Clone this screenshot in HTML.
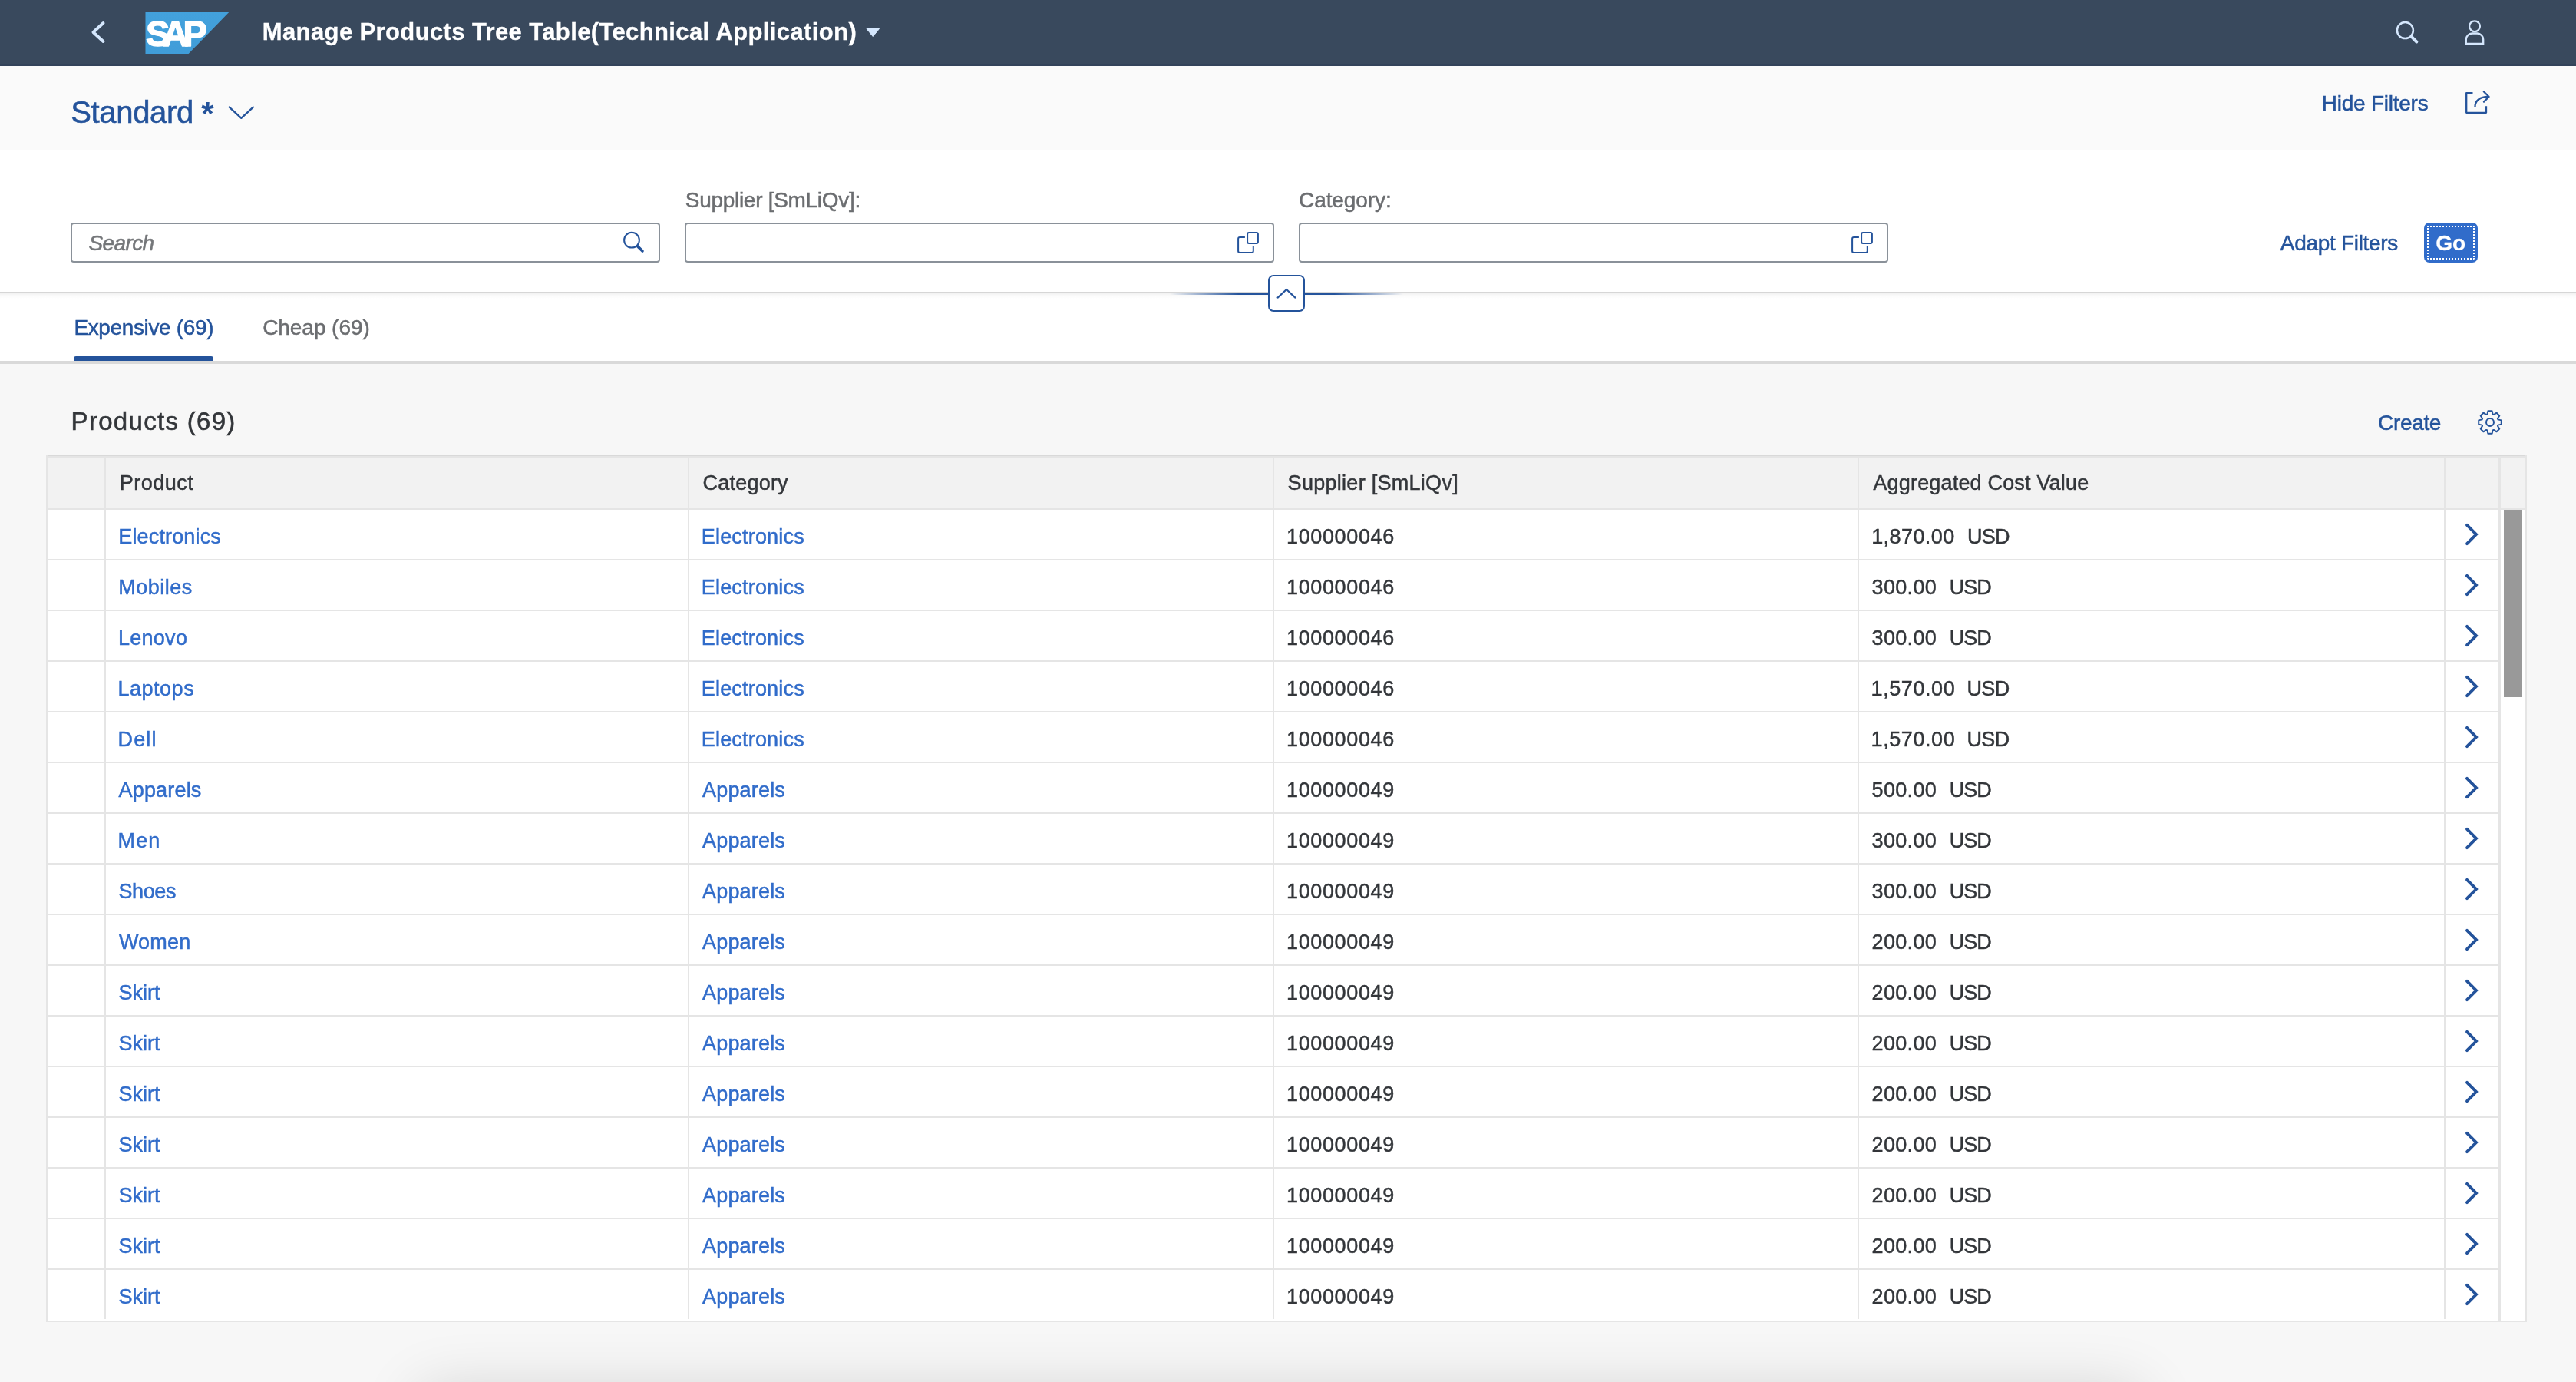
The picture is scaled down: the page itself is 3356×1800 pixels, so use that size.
<!DOCTYPE html><html lang="en"><head><meta charset="utf-8"><title>Manage Products Tree Table(Technical Application)</title><style>
*{box-sizing:border-box;margin:0;padding:0}
html,body{width:3356px;height:1800px;overflow:hidden;background:#f7f7f7;font-family:"Liberation Sans", sans-serif;}
body{position:relative;will-change:transform}
.abs{position:absolute}
svg{position:absolute;left:0;top:0;overflow:visible}
.shell{position:absolute;left:0;top:0;width:3356px;height:86px;background:#39495d}
.band{position:absolute;left:0;top:86px;width:3356px;height:110px;background:#fafafa}
.fbar{position:absolute;left:0;top:196px;width:3356px;height:184px;background:#fff}
.fline{position:absolute;left:0;top:380px;width:3356px;height:2px;background:#d6d6d6}
.fsh{position:absolute;left:0;top:382px;width:3356px;height:7px;background:linear-gradient(to bottom,rgba(0,0,0,.055),rgba(0,0,0,.02) 40%,rgba(0,0,0,0))}
.tabs{position:absolute;left:0;top:382px;width:3356px;height:88px;background:#fff}
.tabline{position:absolute;left:0;top:470px;width:3356px;height:4px;background:#d9d9d9}
.inp{position:absolute;top:290px;height:52px;width:768px;border:2px solid #8a9199;border-radius:4px;background:#fff}
.hdr{position:absolute;left:62px;top:596px;width:3228px;height:66px;background:#f2f2f2}
.vl{position:absolute;width:2px;background:#e5e5e5}
.hl{position:absolute;height:2px;background:#e5e5e5}
.tb{position:absolute;left:62px;top:664px;width:3196px;height:1056px;background:#fff}
</style></head><body>
<div class="shell"></div><div class="abs" style="left:0;top:84px;width:3356px;height:2px;background:#33435a"></div>
<div style="position:absolute;left:341.80px;top:26.00px;font-size:31px;line-height:1;color:#fff;white-space:nowrap;letter-spacing:0.381px;-webkit-text-stroke:0.3px #fff;font-weight:bold;">Manage Products Tree Table(Technical Application)</div>
<div class="band"></div>
<div style="position:absolute;left:92.20px;top:126.00px;font-size:40px;line-height:1;color:#24539b;white-space:nowrap;letter-spacing:-0.334px;-webkit-text-stroke:0.6px #24539b;">Standard</div>
<div style="position:absolute;left:262.20px;top:127.00px;font-size:42px;line-height:1;color:#24539b;white-space:nowrap;letter-spacing:0.000px;font-weight:bold">*</div>
<div style="position:absolute;left:3024.80px;top:121.00px;font-size:28px;line-height:1;color:#24539b;white-space:nowrap;letter-spacing:-0.246px;-webkit-text-stroke:0.5px #24539b;">Hide Filters</div>
<div class="fbar"></div>
<div class="tabs"></div><div class="fline"></div><div class="fsh"></div><div class="tabline"></div>
<div class="inp" style="left:92px"></div><div class="inp" style="left:892px"></div><div class="inp" style="left:1692px"></div>
<div style="position:absolute;left:115.60px;top:303.00px;font-size:28px;line-height:1;color:#75777a;white-space:nowrap;letter-spacing:-0.648px;-webkit-text-stroke:0.5px #75777a;font-style:italic">Search</div>
<div style="position:absolute;left:892.80px;top:247.00px;font-size:28px;line-height:1;color:#6b6d70;white-space:nowrap;letter-spacing:-0.294px;-webkit-text-stroke:0.5px #6b6d70;">Supplier [SmLiQv]:</div>
<div style="position:absolute;left:1692.00px;top:247.00px;font-size:28px;line-height:1;color:#6b6d70;white-space:nowrap;letter-spacing:-0.082px;-webkit-text-stroke:0.5px #6b6d70;">Category:</div>
<div style="position:absolute;left:2970.80px;top:303.00px;font-size:28px;line-height:1;color:#24539b;white-space:nowrap;letter-spacing:-0.300px;-webkit-text-stroke:0.5px #24539b;">Adapt Filters</div>
<div class="abs" style="left:3158px;top:290px;width:70px;height:52px;border-radius:7px;background:#316cca"></div>
<div class="abs" style="left:3162px;top:294px;width:62px;height:44px;border:2px dotted #fff;border-radius:2px"></div>
<div style="position:absolute;left:3173.20px;top:303.00px;font-size:28px;line-height:1;color:#fff;white-space:nowrap;letter-spacing:0.000px;-webkit-text-stroke:0.3px #fff;font-weight:bold">Go</div>
<div style="position:absolute;left:96.40px;top:413.00px;font-size:28px;line-height:1;color:#24539b;white-space:nowrap;letter-spacing:-0.361px;-webkit-text-stroke:0.5px #24539b;">Expensive (69)</div>
<div style="position:absolute;left:342.20px;top:413.00px;font-size:28px;line-height:1;color:#6b6d70;white-space:nowrap;letter-spacing:-0.060px;-webkit-text-stroke:0.5px #6b6d70;">Cheap (69)</div>
<div class="abs" style="left:96px;top:464px;width:182px;height:6px;background:#24539b;border-radius:3px 3px 0 0"></div>
<div class="abs" style="left:1524px;top:382px;width:128px;height:2px;background:linear-gradient(to right,rgba(36,83,155,0),#24539b 70%)"></div>
<div class="abs" style="left:1700px;top:382px;width:128px;height:2px;background:linear-gradient(to left,rgba(36,83,155,0),#24539b 70%)"></div>
<div class="abs" style="left:1652px;top:358px;width:48px;height:48px;border:2px solid #24539b;border-radius:7px;background:#fff"></div>
<div style="position:absolute;left:92.60px;top:532.00px;font-size:33px;line-height:1;color:#33363a;white-space:nowrap;letter-spacing:1.305px;-webkit-text-stroke:0.6px #33363a;">Products (69)</div>
<div style="position:absolute;left:3098.00px;top:537.00px;font-size:28px;line-height:1;color:#24539b;white-space:nowrap;letter-spacing:-0.324px;-webkit-text-stroke:0.5px #24539b;">Create</div>
<div class="abs" style="left:60px;top:592px;width:3232px;height:2px;background:#d9d9d9"></div>
<div class="abs" style="left:60px;top:594px;width:3232px;height:2px;background:#e5e5e5"></div>
<div class="hdr"></div>
<div class="tb"></div>
<div class="abs" style="left:3258px;top:664px;width:32px;height:1056px;background:#fff"></div>
<div class="vl" style="left:60px;top:592px;height:1128px"></div>
<div class="vl" style="left:3290px;top:592px;height:1128px"></div>
<div class="vl" style="left:136px;top:596px;height:1122px"></div>
<div class="vl" style="left:896px;top:596px;height:1122px"></div>
<div class="vl" style="left:1658px;top:596px;height:1122px"></div>
<div class="vl" style="left:2420px;top:596px;height:1122px"></div>
<div class="vl" style="left:3184px;top:596px;height:1122px"></div>
<div class="vl" style="left:3254px;top:596px;width:4px;height:1124px"></div>
<div class="hl" style="left:62px;top:662px;width:3228px"></div>
<div class="hl" style="left:62px;top:728px;width:3192px"></div>
<div class="hl" style="left:62px;top:794px;width:3192px"></div>
<div class="hl" style="left:62px;top:860px;width:3192px"></div>
<div class="hl" style="left:62px;top:926px;width:3192px"></div>
<div class="hl" style="left:62px;top:992px;width:3192px"></div>
<div class="hl" style="left:62px;top:1058px;width:3192px"></div>
<div class="hl" style="left:62px;top:1124px;width:3192px"></div>
<div class="hl" style="left:62px;top:1190px;width:3192px"></div>
<div class="hl" style="left:62px;top:1256px;width:3192px"></div>
<div class="hl" style="left:62px;top:1322px;width:3192px"></div>
<div class="hl" style="left:62px;top:1388px;width:3192px"></div>
<div class="hl" style="left:62px;top:1454px;width:3192px"></div>
<div class="hl" style="left:62px;top:1520px;width:3192px"></div>
<div class="hl" style="left:62px;top:1586px;width:3192px"></div>
<div class="hl" style="left:62px;top:1652px;width:3192px"></div>
<div class="hl" style="left:60px;top:1720px;width:3232px;background:#e5e5e5"></div>
<div class="abs" style="left:3262px;top:664px;width:24px;height:244px;background:#999"></div>
<div style="position:absolute;left:155.80px;top:616.00px;font-size:27px;line-height:1;color:#33363a;white-space:nowrap;letter-spacing:0.480px;-webkit-text-stroke:0.5px #33363a;">Product</div>
<div style="position:absolute;left:915.60px;top:616.00px;font-size:27px;line-height:1;color:#33363a;white-space:nowrap;letter-spacing:0.203px;-webkit-text-stroke:0.5px #33363a;">Category</div>
<div style="position:absolute;left:1677.60px;top:616.00px;font-size:27px;line-height:1;color:#33363a;white-space:nowrap;letter-spacing:0.282px;-webkit-text-stroke:0.5px #33363a;">Supplier [SmLiQv]</div>
<div style="position:absolute;left:2440.40px;top:616.00px;font-size:27px;line-height:1;color:#33363a;white-space:nowrap;letter-spacing:0.180px;-webkit-text-stroke:0.5px #33363a;">Aggregated Cost Value</div>
<div style="position:absolute;left:154.30px;top:686.00px;font-size:27px;line-height:1;color:#316cca;white-space:nowrap;letter-spacing:0.144px;-webkit-text-stroke:0.5px #316cca;">Electronics</div>
<div style="position:absolute;left:913.80px;top:686.00px;font-size:27px;line-height:1;color:#316cca;white-space:nowrap;letter-spacing:0.180px;-webkit-text-stroke:0.5px #316cca;">Electronics</div>
<div style="position:absolute;left:1676.00px;top:686.00px;font-size:27px;line-height:1;color:#33363a;white-space:nowrap;letter-spacing:0.631px;-webkit-text-stroke:0.5px #33363a;">100000046</div>
<div style="position:absolute;left:2438.20px;top:686.00px;font-size:27px;line-height:1;color:#33363a;white-space:nowrap;letter-spacing:0.419px;-webkit-text-stroke:0.5px #33363a;">1,870.00</div>
<div style="position:absolute;left:2563.00px;top:686.00px;font-size:27px;line-height:1;color:#33363a;white-space:nowrap;letter-spacing:-0.720px;-webkit-text-stroke:0.5px #33363a;">USD</div>
<div style="position:absolute;left:154.30px;top:752.00px;font-size:27px;line-height:1;color:#316cca;white-space:nowrap;letter-spacing:0.480px;-webkit-text-stroke:0.5px #316cca;">Mobiles</div>
<div style="position:absolute;left:913.80px;top:752.00px;font-size:27px;line-height:1;color:#316cca;white-space:nowrap;letter-spacing:0.180px;-webkit-text-stroke:0.5px #316cca;">Electronics</div>
<div style="position:absolute;left:1676.00px;top:752.00px;font-size:27px;line-height:1;color:#33363a;white-space:nowrap;letter-spacing:0.631px;-webkit-text-stroke:0.5px #33363a;">100000046</div>
<div style="position:absolute;left:2438.60px;top:752.00px;font-size:27px;line-height:1;color:#33363a;white-space:nowrap;letter-spacing:0.324px;-webkit-text-stroke:0.5px #33363a;">300.00</div>
<div style="position:absolute;left:2539.80px;top:752.00px;font-size:27px;line-height:1;color:#33363a;white-space:nowrap;letter-spacing:-0.990px;-webkit-text-stroke:0.5px #33363a;">USD</div>
<div style="position:absolute;left:153.90px;top:818.00px;font-size:27px;line-height:1;color:#316cca;white-space:nowrap;letter-spacing:0.288px;-webkit-text-stroke:0.5px #316cca;">Lenovo</div>
<div style="position:absolute;left:913.80px;top:818.00px;font-size:27px;line-height:1;color:#316cca;white-space:nowrap;letter-spacing:0.180px;-webkit-text-stroke:0.5px #316cca;">Electronics</div>
<div style="position:absolute;left:1676.00px;top:818.00px;font-size:27px;line-height:1;color:#33363a;white-space:nowrap;letter-spacing:0.631px;-webkit-text-stroke:0.5px #33363a;">100000046</div>
<div style="position:absolute;left:2438.60px;top:818.00px;font-size:27px;line-height:1;color:#33363a;white-space:nowrap;letter-spacing:0.324px;-webkit-text-stroke:0.5px #33363a;">300.00</div>
<div style="position:absolute;left:2539.80px;top:818.00px;font-size:27px;line-height:1;color:#33363a;white-space:nowrap;letter-spacing:-0.990px;-webkit-text-stroke:0.5px #33363a;">USD</div>
<div style="position:absolute;left:153.50px;top:884.00px;font-size:27px;line-height:1;color:#316cca;white-space:nowrap;letter-spacing:0.510px;-webkit-text-stroke:0.5px #316cca;">Laptops</div>
<div style="position:absolute;left:913.80px;top:884.00px;font-size:27px;line-height:1;color:#316cca;white-space:nowrap;letter-spacing:0.180px;-webkit-text-stroke:0.5px #316cca;">Electronics</div>
<div style="position:absolute;left:1676.00px;top:884.00px;font-size:27px;line-height:1;color:#33363a;white-space:nowrap;letter-spacing:0.631px;-webkit-text-stroke:0.5px #33363a;">100000046</div>
<div style="position:absolute;left:2437.60px;top:884.00px;font-size:27px;line-height:1;color:#33363a;white-space:nowrap;letter-spacing:0.570px;-webkit-text-stroke:0.5px #33363a;">1,570.00</div>
<div style="position:absolute;left:2562.40px;top:884.00px;font-size:27px;line-height:1;color:#33363a;white-space:nowrap;letter-spacing:-0.540px;-webkit-text-stroke:0.5px #33363a;">USD</div>
<div style="position:absolute;left:153.50px;top:950.00px;font-size:27px;line-height:1;color:#316cca;white-space:nowrap;letter-spacing:1.140px;-webkit-text-stroke:0.5px #316cca;">Dell</div>
<div style="position:absolute;left:913.80px;top:950.00px;font-size:27px;line-height:1;color:#316cca;white-space:nowrap;letter-spacing:0.180px;-webkit-text-stroke:0.5px #316cca;">Electronics</div>
<div style="position:absolute;left:1676.00px;top:950.00px;font-size:27px;line-height:1;color:#33363a;white-space:nowrap;letter-spacing:0.631px;-webkit-text-stroke:0.5px #33363a;">100000046</div>
<div style="position:absolute;left:2437.60px;top:950.00px;font-size:27px;line-height:1;color:#33363a;white-space:nowrap;letter-spacing:0.570px;-webkit-text-stroke:0.5px #33363a;">1,570.00</div>
<div style="position:absolute;left:2562.40px;top:950.00px;font-size:27px;line-height:1;color:#33363a;white-space:nowrap;letter-spacing:-0.540px;-webkit-text-stroke:0.5px #33363a;">USD</div>
<div style="position:absolute;left:154.50px;top:1016.00px;font-size:27px;line-height:1;color:#316cca;white-space:nowrap;letter-spacing:0.177px;-webkit-text-stroke:0.5px #316cca;">Apparels</div>
<div style="position:absolute;left:915.00px;top:1016.00px;font-size:27px;line-height:1;color:#316cca;white-space:nowrap;letter-spacing:0.178px;-webkit-text-stroke:0.5px #316cca;">Apparels</div>
<div style="position:absolute;left:1676.00px;top:1016.00px;font-size:27px;line-height:1;color:#33363a;white-space:nowrap;letter-spacing:0.631px;-webkit-text-stroke:0.5px #33363a;">100000049</div>
<div style="position:absolute;left:2438.60px;top:1016.00px;font-size:27px;line-height:1;color:#33363a;white-space:nowrap;letter-spacing:0.324px;-webkit-text-stroke:0.5px #33363a;">500.00</div>
<div style="position:absolute;left:2539.80px;top:1016.00px;font-size:27px;line-height:1;color:#33363a;white-space:nowrap;letter-spacing:-0.990px;-webkit-text-stroke:0.5px #33363a;">USD</div>
<div style="position:absolute;left:153.50px;top:1082.00px;font-size:27px;line-height:1;color:#316cca;white-space:nowrap;letter-spacing:1.170px;-webkit-text-stroke:0.5px #316cca;">Men</div>
<div style="position:absolute;left:915.00px;top:1082.00px;font-size:27px;line-height:1;color:#316cca;white-space:nowrap;letter-spacing:0.178px;-webkit-text-stroke:0.5px #316cca;">Apparels</div>
<div style="position:absolute;left:1676.00px;top:1082.00px;font-size:27px;line-height:1;color:#33363a;white-space:nowrap;letter-spacing:0.631px;-webkit-text-stroke:0.5px #33363a;">100000049</div>
<div style="position:absolute;left:2438.60px;top:1082.00px;font-size:27px;line-height:1;color:#33363a;white-space:nowrap;letter-spacing:0.324px;-webkit-text-stroke:0.5px #33363a;">300.00</div>
<div style="position:absolute;left:2539.80px;top:1082.00px;font-size:27px;line-height:1;color:#33363a;white-space:nowrap;letter-spacing:-0.990px;-webkit-text-stroke:0.5px #33363a;">USD</div>
<div style="position:absolute;left:154.50px;top:1148.00px;font-size:27px;line-height:1;color:#316cca;white-space:nowrap;letter-spacing:-0.405px;-webkit-text-stroke:0.5px #316cca;">Shoes</div>
<div style="position:absolute;left:915.00px;top:1148.00px;font-size:27px;line-height:1;color:#316cca;white-space:nowrap;letter-spacing:0.178px;-webkit-text-stroke:0.5px #316cca;">Apparels</div>
<div style="position:absolute;left:1676.00px;top:1148.00px;font-size:27px;line-height:1;color:#33363a;white-space:nowrap;letter-spacing:0.631px;-webkit-text-stroke:0.5px #33363a;">100000049</div>
<div style="position:absolute;left:2438.60px;top:1148.00px;font-size:27px;line-height:1;color:#33363a;white-space:nowrap;letter-spacing:0.324px;-webkit-text-stroke:0.5px #33363a;">300.00</div>
<div style="position:absolute;left:2539.80px;top:1148.00px;font-size:27px;line-height:1;color:#33363a;white-space:nowrap;letter-spacing:-0.990px;-webkit-text-stroke:0.5px #33363a;">USD</div>
<div style="position:absolute;left:154.90px;top:1214.00px;font-size:27px;line-height:1;color:#316cca;white-space:nowrap;letter-spacing:0.180px;-webkit-text-stroke:0.5px #316cca;">Women</div>
<div style="position:absolute;left:915.00px;top:1214.00px;font-size:27px;line-height:1;color:#316cca;white-space:nowrap;letter-spacing:0.178px;-webkit-text-stroke:0.5px #316cca;">Apparels</div>
<div style="position:absolute;left:1676.00px;top:1214.00px;font-size:27px;line-height:1;color:#33363a;white-space:nowrap;letter-spacing:0.631px;-webkit-text-stroke:0.5px #33363a;">100000049</div>
<div style="position:absolute;left:2438.60px;top:1214.00px;font-size:27px;line-height:1;color:#33363a;white-space:nowrap;letter-spacing:0.324px;-webkit-text-stroke:0.5px #33363a;">200.00</div>
<div style="position:absolute;left:2539.80px;top:1214.00px;font-size:27px;line-height:1;color:#33363a;white-space:nowrap;letter-spacing:-0.990px;-webkit-text-stroke:0.5px #33363a;">USD</div>
<div style="position:absolute;left:154.50px;top:1280.00px;font-size:27px;line-height:1;color:#316cca;white-space:nowrap;letter-spacing:0.000px;-webkit-text-stroke:0.5px #316cca;">Skirt</div>
<div style="position:absolute;left:915.00px;top:1280.00px;font-size:27px;line-height:1;color:#316cca;white-space:nowrap;letter-spacing:0.178px;-webkit-text-stroke:0.5px #316cca;">Apparels</div>
<div style="position:absolute;left:1676.00px;top:1280.00px;font-size:27px;line-height:1;color:#33363a;white-space:nowrap;letter-spacing:0.631px;-webkit-text-stroke:0.5px #33363a;">100000049</div>
<div style="position:absolute;left:2438.60px;top:1280.00px;font-size:27px;line-height:1;color:#33363a;white-space:nowrap;letter-spacing:0.324px;-webkit-text-stroke:0.5px #33363a;">200.00</div>
<div style="position:absolute;left:2539.80px;top:1280.00px;font-size:27px;line-height:1;color:#33363a;white-space:nowrap;letter-spacing:-0.990px;-webkit-text-stroke:0.5px #33363a;">USD</div>
<div style="position:absolute;left:154.50px;top:1346.00px;font-size:27px;line-height:1;color:#316cca;white-space:nowrap;letter-spacing:0.000px;-webkit-text-stroke:0.5px #316cca;">Skirt</div>
<div style="position:absolute;left:915.00px;top:1346.00px;font-size:27px;line-height:1;color:#316cca;white-space:nowrap;letter-spacing:0.178px;-webkit-text-stroke:0.5px #316cca;">Apparels</div>
<div style="position:absolute;left:1676.00px;top:1346.00px;font-size:27px;line-height:1;color:#33363a;white-space:nowrap;letter-spacing:0.631px;-webkit-text-stroke:0.5px #33363a;">100000049</div>
<div style="position:absolute;left:2438.60px;top:1346.00px;font-size:27px;line-height:1;color:#33363a;white-space:nowrap;letter-spacing:0.324px;-webkit-text-stroke:0.5px #33363a;">200.00</div>
<div style="position:absolute;left:2539.80px;top:1346.00px;font-size:27px;line-height:1;color:#33363a;white-space:nowrap;letter-spacing:-0.990px;-webkit-text-stroke:0.5px #33363a;">USD</div>
<div style="position:absolute;left:154.50px;top:1412.00px;font-size:27px;line-height:1;color:#316cca;white-space:nowrap;letter-spacing:0.000px;-webkit-text-stroke:0.5px #316cca;">Skirt</div>
<div style="position:absolute;left:915.00px;top:1412.00px;font-size:27px;line-height:1;color:#316cca;white-space:nowrap;letter-spacing:0.178px;-webkit-text-stroke:0.5px #316cca;">Apparels</div>
<div style="position:absolute;left:1676.00px;top:1412.00px;font-size:27px;line-height:1;color:#33363a;white-space:nowrap;letter-spacing:0.631px;-webkit-text-stroke:0.5px #33363a;">100000049</div>
<div style="position:absolute;left:2438.60px;top:1412.00px;font-size:27px;line-height:1;color:#33363a;white-space:nowrap;letter-spacing:0.324px;-webkit-text-stroke:0.5px #33363a;">200.00</div>
<div style="position:absolute;left:2539.80px;top:1412.00px;font-size:27px;line-height:1;color:#33363a;white-space:nowrap;letter-spacing:-0.990px;-webkit-text-stroke:0.5px #33363a;">USD</div>
<div style="position:absolute;left:154.50px;top:1478.00px;font-size:27px;line-height:1;color:#316cca;white-space:nowrap;letter-spacing:0.000px;-webkit-text-stroke:0.5px #316cca;">Skirt</div>
<div style="position:absolute;left:915.00px;top:1478.00px;font-size:27px;line-height:1;color:#316cca;white-space:nowrap;letter-spacing:0.178px;-webkit-text-stroke:0.5px #316cca;">Apparels</div>
<div style="position:absolute;left:1676.00px;top:1478.00px;font-size:27px;line-height:1;color:#33363a;white-space:nowrap;letter-spacing:0.631px;-webkit-text-stroke:0.5px #33363a;">100000049</div>
<div style="position:absolute;left:2438.60px;top:1478.00px;font-size:27px;line-height:1;color:#33363a;white-space:nowrap;letter-spacing:0.324px;-webkit-text-stroke:0.5px #33363a;">200.00</div>
<div style="position:absolute;left:2539.80px;top:1478.00px;font-size:27px;line-height:1;color:#33363a;white-space:nowrap;letter-spacing:-0.990px;-webkit-text-stroke:0.5px #33363a;">USD</div>
<div style="position:absolute;left:154.50px;top:1544.00px;font-size:27px;line-height:1;color:#316cca;white-space:nowrap;letter-spacing:0.000px;-webkit-text-stroke:0.5px #316cca;">Skirt</div>
<div style="position:absolute;left:915.00px;top:1544.00px;font-size:27px;line-height:1;color:#316cca;white-space:nowrap;letter-spacing:0.178px;-webkit-text-stroke:0.5px #316cca;">Apparels</div>
<div style="position:absolute;left:1676.00px;top:1544.00px;font-size:27px;line-height:1;color:#33363a;white-space:nowrap;letter-spacing:0.631px;-webkit-text-stroke:0.5px #33363a;">100000049</div>
<div style="position:absolute;left:2438.60px;top:1544.00px;font-size:27px;line-height:1;color:#33363a;white-space:nowrap;letter-spacing:0.324px;-webkit-text-stroke:0.5px #33363a;">200.00</div>
<div style="position:absolute;left:2539.80px;top:1544.00px;font-size:27px;line-height:1;color:#33363a;white-space:nowrap;letter-spacing:-0.990px;-webkit-text-stroke:0.5px #33363a;">USD</div>
<div style="position:absolute;left:154.50px;top:1610.00px;font-size:27px;line-height:1;color:#316cca;white-space:nowrap;letter-spacing:0.000px;-webkit-text-stroke:0.5px #316cca;">Skirt</div>
<div style="position:absolute;left:915.00px;top:1610.00px;font-size:27px;line-height:1;color:#316cca;white-space:nowrap;letter-spacing:0.178px;-webkit-text-stroke:0.5px #316cca;">Apparels</div>
<div style="position:absolute;left:1676.00px;top:1610.00px;font-size:27px;line-height:1;color:#33363a;white-space:nowrap;letter-spacing:0.631px;-webkit-text-stroke:0.5px #33363a;">100000049</div>
<div style="position:absolute;left:2438.60px;top:1610.00px;font-size:27px;line-height:1;color:#33363a;white-space:nowrap;letter-spacing:0.324px;-webkit-text-stroke:0.5px #33363a;">200.00</div>
<div style="position:absolute;left:2539.80px;top:1610.00px;font-size:27px;line-height:1;color:#33363a;white-space:nowrap;letter-spacing:-0.990px;-webkit-text-stroke:0.5px #33363a;">USD</div>
<div style="position:absolute;left:154.50px;top:1676.00px;font-size:27px;line-height:1;color:#316cca;white-space:nowrap;letter-spacing:0.000px;-webkit-text-stroke:0.5px #316cca;">Skirt</div>
<div style="position:absolute;left:915.00px;top:1676.00px;font-size:27px;line-height:1;color:#316cca;white-space:nowrap;letter-spacing:0.178px;-webkit-text-stroke:0.5px #316cca;">Apparels</div>
<div style="position:absolute;left:1676.00px;top:1676.00px;font-size:27px;line-height:1;color:#33363a;white-space:nowrap;letter-spacing:0.631px;-webkit-text-stroke:0.5px #33363a;">100000049</div>
<div style="position:absolute;left:2438.60px;top:1676.00px;font-size:27px;line-height:1;color:#33363a;white-space:nowrap;letter-spacing:0.324px;-webkit-text-stroke:0.5px #33363a;">200.00</div>
<div style="position:absolute;left:2539.80px;top:1676.00px;font-size:27px;line-height:1;color:#33363a;white-space:nowrap;letter-spacing:-0.990px;-webkit-text-stroke:0.5px #33363a;">USD</div>
<svg width="3356" height="1800" viewBox="0 0 3356 1800">
<defs><linearGradient id="sapg" x1="0" y1="0" x2="0" y2="1"><stop offset="0" stop-color="#43a1dc"/><stop offset="1" stop-color="#409dd9"/></linearGradient></defs>
<polyline points="134.5,30 121.5,42 134.5,54" fill="none" stroke="#d5e7fd" stroke-width="4" stroke-linecap="round" stroke-linejoin="round"/>
<polygon points="189.5,16 298.2,16 245.6,70 189.5,70" fill="url(#sapg)"/>
<text x="190 211.4 238.6" y="60.2" font-family="Liberation Sans, sans-serif" font-weight="bold" font-size="47" fill="#fff" stroke="#fff" stroke-width="1.4" stroke-linejoin="round">SAP</text>
<polygon points="1129,37.5 1145.5,37.5 1137.2,47.5" fill="#d5e7fd" stroke="#d5e7fd" stroke-width="1" stroke-linejoin="round"/>
<circle cx="3133.4" cy="39.6" r="10.5" fill="none" stroke="#d5e7fd" stroke-width="2.5"/>
<line x1="3141.5" y1="47.7" x2="3148.3" y2="54.5" stroke="#d5e7fd" stroke-width="4" stroke-linecap="round"/>
<circle cx="3224" cy="34.2" r="6.9" fill="none" stroke="#d5e7fd" stroke-width="2.3"/>
<path d="M3212.8,56.8 V51.5 A8,8 0 0 1 3220.8,43.5 H3227.2 A8,8 0 0 1 3235.2,51.5 V56.8 Z" fill="none" stroke="#d5e7fd" stroke-width="2.3" stroke-linejoin="miter"/>
<polyline points="298.8,139.6 314.3,153.8 329.8,139.6" fill="none" stroke="#24539b" stroke-width="2.4" stroke-linecap="round" stroke-linejoin="round"/>
<path d="M3221.5,121.1 H3213.2 V146.8 H3239 V138.3" fill="none" stroke="#24539b" stroke-width="2.3" stroke-linejoin="round"/>
<path d="M3224.5,139 C3224.5,131 3231,126 3241.5,126" fill="none" stroke="#24539b" stroke-width="2.3" stroke-linecap="round"/>
<polyline points="3235.8,119.2 3242.6,126 3236,132.6" fill="none" stroke="#24539b" stroke-width="2.3" stroke-linecap="round" stroke-linejoin="round"/>
<circle cx="823" cy="312.7" r="9.9" fill="none" stroke="#24539b" stroke-width="2"/>
<line x1="830.5" y1="320.6" x2="837" y2="327" stroke="#24539b" stroke-width="3.6" stroke-linecap="round"/>
<rect x="1625.1" y="302.9" width="13.8" height="14.1" rx="2" fill="none" stroke="#24539b" stroke-width="2"/>
<path d="M1621.9,309 H1615.1 a2,2 0 0 0 -2,2 V326.9 a2,2 0 0 0 2,2 H1630.8 a2,2 0 0 0 2,-2 V320" fill="none" stroke="#24539b" stroke-width="2"/>
<rect x="2425.1" y="302.9" width="13.8" height="14.1" rx="2" fill="none" stroke="#24539b" stroke-width="2"/>
<path d="M2421.9,309 H2415.1 a2,2 0 0 0 -2,2 V326.9 a2,2 0 0 0 2,2 H2430.8 a2,2 0 0 0 2,-2 V320" fill="none" stroke="#24539b" stroke-width="2"/>
<polyline points="1664.6,387.6 1676,377 1687.4,387.6" fill="none" stroke="#24539b" stroke-width="2.2" stroke-linecap="round" stroke-linejoin="round"/>
<path d="M3240.40,539.61 L3241.40,535.23 L3246.60,535.23 L3247.60,539.61 L3248.80,540.10 L3252.61,537.72 L3256.28,541.39 L3253.90,545.20 L3254.39,546.40 L3258.77,547.40 L3258.77,552.60 L3254.39,553.60 L3253.90,554.80 L3256.28,558.61 L3252.61,562.28 L3248.80,559.90 L3247.60,560.39 L3246.60,564.77 L3241.40,564.77 L3240.40,560.39 L3239.20,559.90 L3235.39,562.28 L3231.72,558.61 L3234.10,554.80 L3233.61,553.60 L3229.23,552.60 L3229.23,547.40 L3233.61,546.40 L3234.10,545.20 L3231.72,541.39 L3235.39,537.72 L3239.20,540.10Z" fill="none" stroke="#24539b" stroke-width="2" stroke-linejoin="round"/>
<circle cx="3244" cy="550" r="5" fill="none" stroke="#24539b" stroke-width="2"/>
<polyline points="3214,683.9 3226,696 3214,708.1" fill="none" stroke="#24539b" stroke-width="3.9" stroke-linecap="round" stroke-linejoin="miter"/>
<polyline points="3214,749.9 3226,762 3214,774.1" fill="none" stroke="#24539b" stroke-width="3.9" stroke-linecap="round" stroke-linejoin="miter"/>
<polyline points="3214,815.9 3226,828 3214,840.1" fill="none" stroke="#24539b" stroke-width="3.9" stroke-linecap="round" stroke-linejoin="miter"/>
<polyline points="3214,881.9 3226,894 3214,906.1" fill="none" stroke="#24539b" stroke-width="3.9" stroke-linecap="round" stroke-linejoin="miter"/>
<polyline points="3214,947.9 3226,960 3214,972.1" fill="none" stroke="#24539b" stroke-width="3.9" stroke-linecap="round" stroke-linejoin="miter"/>
<polyline points="3214,1013.9 3226,1026 3214,1038.1" fill="none" stroke="#24539b" stroke-width="3.9" stroke-linecap="round" stroke-linejoin="miter"/>
<polyline points="3214,1079.9 3226,1092 3214,1104.1" fill="none" stroke="#24539b" stroke-width="3.9" stroke-linecap="round" stroke-linejoin="miter"/>
<polyline points="3214,1145.9 3226,1158 3214,1170.1" fill="none" stroke="#24539b" stroke-width="3.9" stroke-linecap="round" stroke-linejoin="miter"/>
<polyline points="3214,1211.9 3226,1224 3214,1236.1" fill="none" stroke="#24539b" stroke-width="3.9" stroke-linecap="round" stroke-linejoin="miter"/>
<polyline points="3214,1277.9 3226,1290 3214,1302.1" fill="none" stroke="#24539b" stroke-width="3.9" stroke-linecap="round" stroke-linejoin="miter"/>
<polyline points="3214,1343.9 3226,1356 3214,1368.1" fill="none" stroke="#24539b" stroke-width="3.9" stroke-linecap="round" stroke-linejoin="miter"/>
<polyline points="3214,1409.9 3226,1422 3214,1434.1" fill="none" stroke="#24539b" stroke-width="3.9" stroke-linecap="round" stroke-linejoin="miter"/>
<polyline points="3214,1475.9 3226,1488 3214,1500.1" fill="none" stroke="#24539b" stroke-width="3.9" stroke-linecap="round" stroke-linejoin="miter"/>
<polyline points="3214,1541.9 3226,1554 3214,1566.1" fill="none" stroke="#24539b" stroke-width="3.9" stroke-linecap="round" stroke-linejoin="miter"/>
<polyline points="3214,1607.9 3226,1620 3214,1632.1" fill="none" stroke="#24539b" stroke-width="3.9" stroke-linecap="round" stroke-linejoin="miter"/>
<polyline points="3214,1673.9 3226,1686 3214,1698.1" fill="none" stroke="#24539b" stroke-width="3.9" stroke-linecap="round" stroke-linejoin="miter"/>
</svg>
<div class="abs" style="left:548px;top:1812px;width:2240px;height:100px;border-radius:8px;background:#ccc;box-shadow:0 0 80px 0 rgba(0,0,0,.16)"></div>
</body></html>
